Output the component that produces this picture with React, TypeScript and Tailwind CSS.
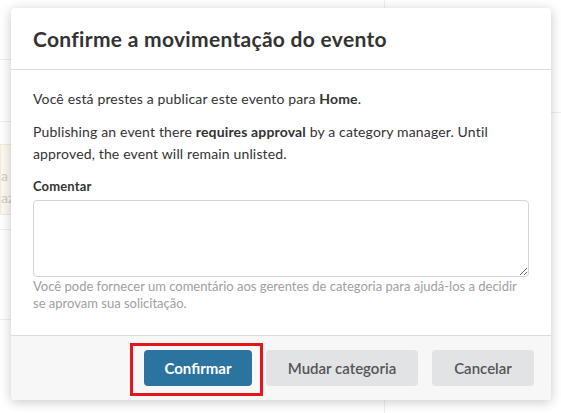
import React from "react";

const font = { fontFamily: "Lato, 'Open Sans', sans-serif" };

const BackgroundPage = () => {
  return (
    <div className="flex h-full w-full">
      <div className="flex w-[385px] flex-col border-r border-[#eee]">
        <div className="h-[60px] border-b border-[#eee]" />
        <div className="h-[62px] border-b border-[#eee]" />
        <div className="mt-[22px] h-[71px] border border-[#f3ead9] bg-[#fdf9f1] pl-0 pt-[20px] text-[14px] leading-[22px] text-[#ccc]">
          <p>a e</p>
          <p>azo</p>
        </div>
        <div className="h-[15px] border-b border-[#eee]" />
        <div className="h-[90px] border-b border-[#eee]" />
      </div>
      <div className="flex-1">
        <div className="h-[113px] border-b border-[#eee]" />
      </div>
    </div>
  );
};

const ConfirmModal = () => {
  return (
    <div className="absolute left-[11px] top-[8px] flex h-[392px] w-[540px] flex-col overflow-hidden rounded-[4px] bg-white shadow-[0_2px_12px_rgba(0,0,0,0.22)]">
      <div className="flex h-[62px] items-center border-b border-[#dcdcdc] px-[22px]">
        <h2 className="text-[21px] font-bold tracking-[0.3px] text-[#333]">Confirme a movimentação do evento</h2>
      </div>
      <div className="flex flex-1 flex-col px-[22px] pt-[18px] text-[14px] leading-[22px] tracking-[0.15px] text-[#333]">
        <p>
          Você está prestes a publicar este evento para <b>Home</b>.
        </p>
        <p className="mt-[11px]">
          Publishing an event there <b>requires approval</b> by a category manager. Until approved, the event
          will remain unlisted.
        </p>
        <label className="mt-[10px] text-[13px] font-bold">Comentar</label>
        <textarea className="mt-[3px] h-[77px] w-full rounded-[4px] border border-[#d5d5d5] bg-white outline-none" />
        <p className="mt-[1px] text-[13px] leading-[17px] tracking-normal text-[#a0a0a0]">
          Você pode fornecer um comentário aos gerentes de categoria para ajudá-los a decidir se aprovam sua
          solicitação.
        </p>
      </div>
      <div className="flex h-[65px] items-center justify-end gap-[14px] border-t border-[#dcdcdc] bg-[#f7f7f7] pr-[17px]">
        <button className="relative h-[36px] w-[108px] rounded-[4px] bg-[#2c74a0] text-[15px] font-bold text-white">
          Confirmar
          <span className="absolute bottom-[-10px] left-[-14px] right-[-11px] top-[-7px] border-[3px] border-[#e3161b]" />
        </button>
        <button className="h-[36px] w-[152px] rounded-[4px] bg-[#e2e3e5] text-[15px] font-semibold text-[#555]">
          Mudar categoria
        </button>
        <button className="h-[36px] w-[102px] rounded-[4px] bg-[#e2e3e5] text-[15px] font-semibold text-[#555]">
          Cancelar
        </button>
      </div>
    </div>
  );
};

export default function App() {
  return (
    <div className="relative h-[413px] w-[561px] overflow-hidden bg-white" style={font}>
      <BackgroundPage />
      <ConfirmModal />
    </div>
  );
}
